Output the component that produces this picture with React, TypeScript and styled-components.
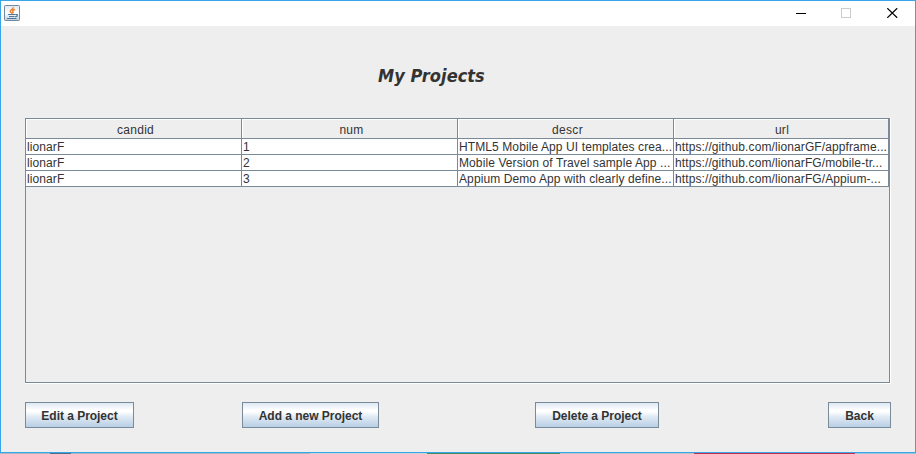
import React from "react";
import styled, { createGlobalStyle } from "styled-components";

const Global = createGlobalStyle`
  * { box-sizing: border-box; }
  html, body { margin: 0; padding: 0; overflow: hidden; background: #aab4ba; }
  body { font-family: "Liberation Sans", Arial, sans-serif; font-size: 12px; color: #333; }
`;

const Desktop = styled.div`
  width: 916px;
  height: 454px;
  display: flex;
  flex-direction: column;
`;

const Window = styled.main`
  height: 453px;
  display: flex;
  flex-direction: column;
  border: 1px solid #38a5e8;
  background: #eeeeee;
`;

const Taskbar = styled.div`
  height: 1px;
  display: flex;
`;

const Task = styled.i<{ $w: number; $c: string }>`
  width: ${(p) => p.$w}px;
  background: ${(p) => p.$c};
`;

const TitleBar = styled.header`
  height: 25px;
  flex: none;
  display: flex;
  justify-content: space-between;
  background: #fff;
  padding: 4px 17px 0 3px;
`;

const Controls = styled.div`
  display: flex;
  gap: 35px;
  padding-top: 3px;
`;

const Title = styled.h1`
  margin: 0;
  height: 92px;
  flex: none;
  padding: 39px 0 0 377px;
  font: italic bold 18px/22px "DejaVu Sans Condensed", "DejaVu Sans", sans-serif;
  font-stretch: condensed;
  letter-spacing: 0.05px;
  color: #333;
`;

const ScrollPane = styled.section`
  width: 866px;
  height: 266px;
  flex: none;
  margin-left: 24px;
  border-right: 1px solid #fff;
  border-bottom: 1px solid #fff;
`;

const Viewport = styled.div`
  height: 265px;
  border: 1px solid #7a8a99;
`;

const Row = styled.div`
  display: grid;
  grid-template-columns: 216px 216px 216px 215px;
`;

const HeadCell = styled.div`
  height: 20px;
  border: solid #7a8a99;
  border-width: 0 1px 1px 0;
  box-shadow: inset 1px 1px #fff;
  padding: 1px 0 0 4px;
  text-align: center;
  line-height: 21px;
  letter-spacing: 0.3px;

  &:last-child { padding-left: 2px; }
`;

const Cell = styled.div`
  height: 16px;
  border: solid #7a8a99;
  border-width: 0 1px 1px 0;
  background: #fff;
  padding-left: 1px;
  line-height: 16px;
  white-space: nowrap;
  overflow: hidden;
  letter-spacing: 0.1px;
`;

const Actions = styled.footer`
  display: flex;
  margin: 18px 0 0 24px;
`;

const Button = styled.button<{ $w: number; $gap?: number }>`
  width: ${(p) => p.$w}px;
  height: 26px;
  margin: 0 0 0 ${(p) => p.$gap ?? 0}px;
  padding: 2px 0 0;
  border: 1px solid #7a8a99;
  background: linear-gradient(#dde8f3 0%, #ffffff 30%, #ffffff 36%, #dde8f3 60%, #b8cfe5 100%);
  font: bold 12px/22px "Liberation Sans", Arial, sans-serif;
  letter-spacing: -0.03px;
  color: #333;
`;

const JavaIcon = () => (
  <svg width="16" height="16" viewBox="0 0 16 16" fill="none">
    <defs>
      <linearGradient id="tile" x2="0" y2="1">
        <stop stopColor="#dfe6ec" />
        <stop offset="0.5" stopColor="#fff" />
        <stop offset="1" stopColor="#bccbd8" />
      </linearGradient>
    </defs>
    <rect x="0.5" y="0.5" width="15" height="15" rx="0.8" fill="url(#tile)" stroke="#7088a0" />
    <path d="M9.2 2.2C9.8 4.2 5.6 5 6.3 6.8C6.6 7.6 7.6 7.8 7.8 8.6M11 4.4C9.4 4.9 8.2 5.8 8.9 6.7C9.4 7.4 9 8 8.5 8.5" stroke="#e8812b" strokeWidth="1.5" />
    <path d="M4 9.5H11.5M5 11.5H10.5M3 13.5H12.5" stroke="#4b789c" strokeWidth="1.1" />
    <path d="M11.5 9.5H13.2V11L11.2 11.9" stroke="#4b789c" strokeWidth="1.2" />
  </svg>
);

const columns = ["candid", "num", "descr", "url"];
const rows = [
  ["lionarF", "1", "HTML5 Mobile App UI templates crea...", "https://github.com/lionarGF/appframe..."],
  ["lionarF", "2", "Mobile Version of Travel sample App ...", "https://github.com/lionarFG/mobile-tr..."],
  ["lionarF", "3", "Appium Demo App with clearly define...", "https://github.com/lionarFG/Appium-..."],
];

export default function App() {
  return (
    <>
      <Global />
      <Desktop>
        <Window>
          <TitleBar>
            <JavaIcon />
            <Controls>
              <svg width="10" height="11" viewBox="0 0 10 11"><path d="M0 5.5H10" stroke="#000" /></svg>
              <svg width="11" height="10" viewBox="0 0 11 10" fill="none"><rect x="0.5" y="0.5" width="9" height="9" stroke="#ccc" /></svg>
              <svg width="11" height="10" viewBox="0 0 11 10"><path d="M0.3 0.2L10.2 9.8M10.2 0.2L0.3 9.8" stroke="#000" strokeWidth="1.2" /></svg>
            </Controls>
          </TitleBar>
          <Title>My Projects</Title>
          <ScrollPane>
            <Viewport>
              <Row>{columns.map((c) => <HeadCell key={c}>{c}</HeadCell>)}</Row>
              {rows.map((r) => (
                <Row key={r[1]}>{r.map((t) => <Cell key={t}>{t}</Cell>)}</Row>
              ))}
            </Viewport>
          </ScrollPane>
          <Actions>
            <Button $w={109}>Edit a Project</Button>
            <Button $w={137} $gap={108}>Add a new Project</Button>
            <Button $w={124} $gap={156}>Delete a Project</Button>
            <Button $w={63} $gap={169}>Back</Button>
          </Actions>
        </Window>
        <Taskbar>
          <Task $w={50} $c="#a9b8c0" />
          <Task $w={21} $c="#4d6f86" />
          <Task $w={239} $c="#a9b8c0" />
          <Task $w={117} $c="#c9d3d8" />
          <Task $w={133} $c="#3f8f5a" />
          <Task $w={134} $c="#b9c4ca" />
          <Task $w={161} $c="#c0324a" />
          <Task $w={61} $c="#9cc5dc" />
        </Taskbar>
      </Desktop>
    </>
  );
}
